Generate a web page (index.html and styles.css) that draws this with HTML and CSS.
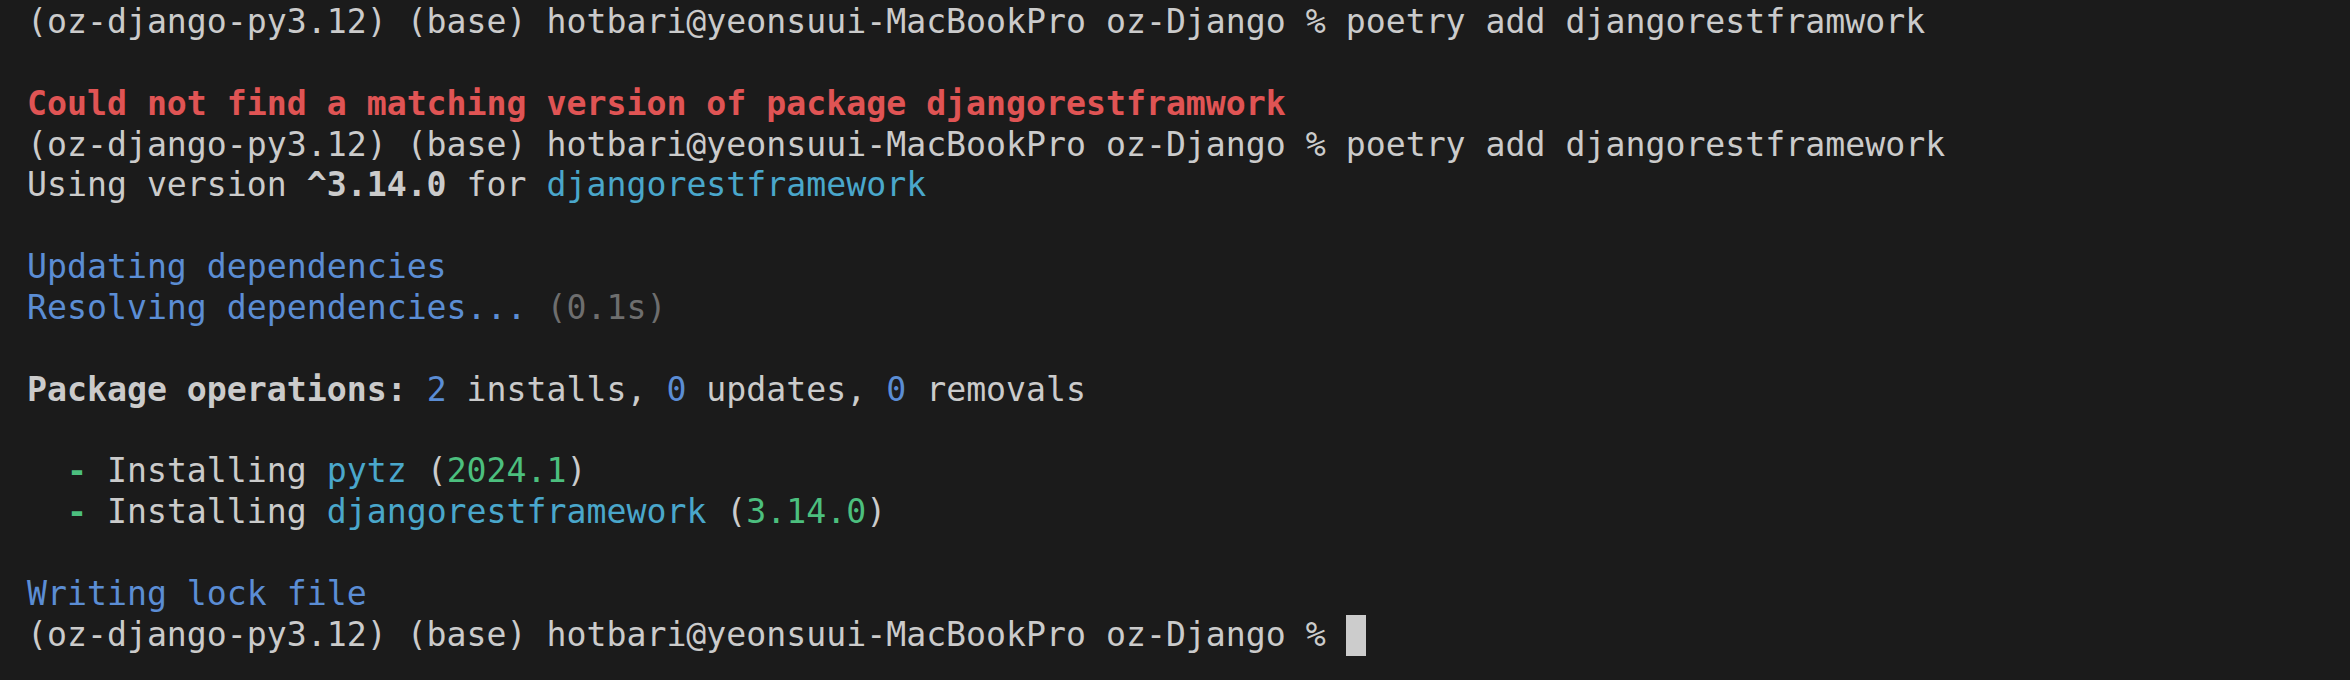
FILE: index.html
```html
<!DOCTYPE html>
<html lang="en">
<head>
    <meta charset="UTF-8">
    <meta name="viewport" content="width=device-width, initial-scale=1.0">
    <title>Terminal</title>
    <link rel="stylesheet" href="styles.css">
</head>
<body>
    <div id="terminal">
        <div class="line">(oz-django-py3.12) (base) hotbari@yeonsuui-MacBookPro oz-Django % poetry add djangorestframwork</div>
        <div class="line"> </div>
        <div class="line err">Could not find a matching version of package djangorestframwork</div>
        <div class="line">(oz-django-py3.12) (base) hotbari@yeonsuui-MacBookPro oz-Django % poetry add djangorestframework</div>
        <div class="line">Using version <b>^3.14.0</b> for <span class="pkg">djangorestframework</span></div>
        <div class="line"> </div>
        <div class="line info">Updating dependencies</div>
        <div class="line"><span class="info">Resolving dependencies...</span> <span class="dim">(0.1s)</span></div>
        <div class="line"> </div>
        <div class="line"><b>Package operations:</b> <span class="info">2</span> installs, <span class="info">0</span> updates, <span class="info">0</span> removals</div>
        <div class="line"> </div>
        <div class="line">  <b class="ok">-</b> Installing <span class="pkg">pytz</span> (<span class="ok">2024.1</span>)</div>
        <div class="line">  <b class="ok">-</b> Installing <span class="pkg">djangorestframework</span> (<span class="ok">3.14.0</span>)</div>
        <div class="line"> </div>
        <div class="line info">Writing lock file</div>
        <div class="line">(oz-django-py3.12) (base) hotbari@yeonsuui-MacBookPro oz-Django % <span class="cursor"> </span></div>
    </div>
</body>
</html>
```

FILE: styles.css
```css
body{
    margin: 0;
    background-color: #1b1b1b;
}
#terminal{
    padding: 2px 0 0 27px;
    height: 678px;
    font-family: "DejaVu Sans Mono", monospace;
    font-size: 33.2px;
    line-height: 40.87px;
    color: #cbcbcb;
}
.line{
    white-space: pre;
    height: 40.87px;
}
b{
    font-weight: bold;
}
.err{
    color: #e05454;
    font-weight: bold;
}
.info{
    color: #5b8dd4;
}
.pkg{
    color: #4aa7cb;
}
.ok{
    color: #4cbf7e;
}
.dim{
    color: #6e6e6e;
}
.cursor{
    display: inline-block;
    width: 20px;
    height: 40.87px;
    vertical-align: top;
    background: #cccccc;
}
```
